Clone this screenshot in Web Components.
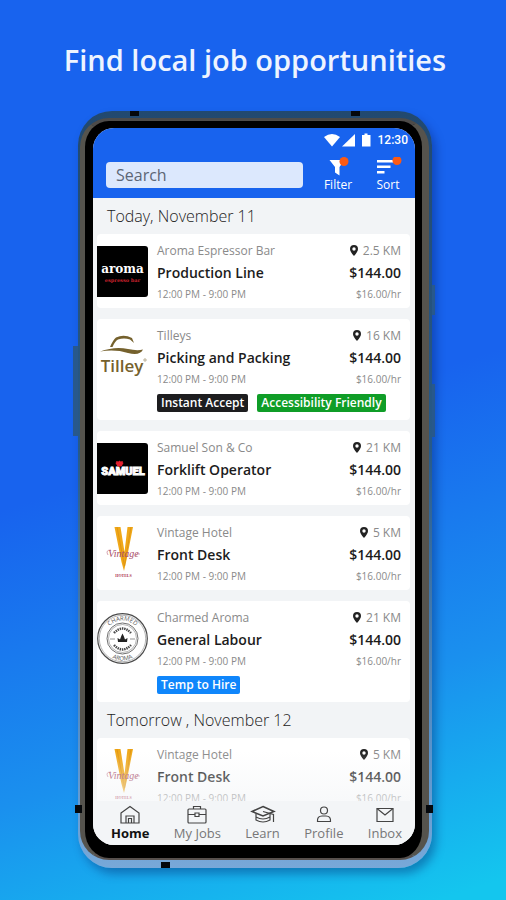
<!DOCTYPE html>
<html lang="en">
<head>
<meta charset="utf-8">
<meta name="viewport" content="width=device-width, initial-scale=1">
<title>Find local job opportunities</title>
<style>
    html, body {
        margin: 0;
        height: 100%;
    }

    body {
        font-family: "Open Sans", "Noto Sans", sans-serif;
        background: linear-gradient(162deg, #1863ee 0%, #1863ee 48%, #1a90ee 76%, #14c6ee 98%);
    }
</style>
</head>
<body>

<promo-page>
    <span slot="title">Find local job opportunities</span>
    <phone-frame>
        <app-header slot="header"></app-header>
        <day-group day="Today, November 11">
            <job-card logo="aroma" company="Aroma Espressor Bar" role-name="Production Line" distance="2.5 KM"></job-card>
            <job-card logo="tilley" company="Tilleys" role-name="Picking and Packing" distance="16 KM">
                <job-tag>Instant Accept</job-tag>
                <job-tag color="green">Accessibility Friendly</job-tag>
            </job-card>
            <job-card logo="samuel" company="Samuel Son &amp; Co" role-name="Forklift Operator" distance="21 KM"></job-card>
            <job-card logo="vintage" company="Vintage Hotel" role-name="Front Desk" distance="5 KM"></job-card>
            <job-card logo="charmed" company="Charmed Aroma" role-name="General Labour" distance="21 KM">
                <job-tag color="blue">Temp to Hire</job-tag>
            </job-card>
        </day-group>
        <day-group day="Tomorrow , November 12">
            <job-card logo="vintage" company="Vintage Hotel" role-name="Front Desk" distance="5 KM"></job-card>
        </day-group>
        <tab-bar slot="footer">
            <tab-item icon="home" active>Home</tab-item>
            <tab-item icon="jobs">My Jobs</tab-item>
            <tab-item icon="learn">Learn</tab-item>
            <tab-item icon="profile">Profile</tab-item>
            <tab-item icon="inbox">Inbox</tab-item>
        </tab-bar>
    </phone-frame>
</promo-page>

<script>
const LOGOS = {
    aroma: `
        <svg viewBox="0 0 51 51">
            <path d="M0 0H48Q51 0 51 3V48Q51 51 48 51H0Z" fill="#000"/>
            <text x="25.5" y="27" text-anchor="middle" font-family="DejaVu Serif, serif" font-weight="700" font-size="12" fill="#fff">aroma</text>
            <text x="25.5" y="36" text-anchor="middle" font-family="DejaVu Serif, serif" font-weight="700" font-size="5" fill="#c8202c">espresso bar</text>
        </svg>`,
    tilley: `
        <svg viewBox="0 0 51 51">
            <g fill="#75612d">
                <path d="M13 16Q16 9 19 6.500Q27 3 35 7L37 12L33 8.500Q27 6.500 21 8.500Q18 10 15.500 16Z"/>
                <path d="M3 20.500Q18 15 31 18Q40 20 46 18.500Q43 25 31 22Q18 18 3 20.500Z"/>
            </g>
            <text x="25" y="41" text-anchor="middle" font-family="Open Sans, sans-serif" font-weight="600" font-size="17" fill="#75612d">Tilley</text>
            <circle cx="48" cy="29" r="1.2" fill="none" stroke="#75612d" stroke-width=".5"/>
        </svg>`,
    samuel: `
        <svg viewBox="0 0 51 51">
            <path d="M0 0H48Q51 0 51 3V48Q51 51 48 51H0Z" fill="#000"/>
            <text x="26" y="31.5" text-anchor="middle" font-family="Roboto, sans-serif" font-weight="900" font-size="11" fill="#fff" stroke="#fff" stroke-width=".9">SAMUEL</text>
            <path d="M20.500 23.500L18.500 20L19.500 19L19 18L21.500 18.500L22.500 17.500L23.500 18.500L26 18L25.500 19L26.500 20L24.500 23.500Z" fill="#e3202e"/>
        </svg>`,
    vintage: `
        <svg viewBox="0 2 51 51">
            <path d="M17.500 1H23.500L27.500 26L30.500 1H36L29.500 34L27 45L24.500 36Z" fill="#f0a818"/>
            <path d="M20 1L27.500 40L34 1" fill="none" stroke="#d98e12" stroke-width=".7"/>
            <text x="26.500" y="31" text-anchor="middle" font-family="Liberation Serif, serif" font-style="italic" font-size="10" fill="#a84a66">Vintage</text>
            <path d="M11 29Q8 24 14 24M38 30Q41 27 43 28" fill="none" stroke="#b8667c" stroke-width=".6"/>
            <text x="26.500" y="51" text-anchor="middle" font-family="Liberation Serif, serif" font-weight="700" font-size="4" fill="#ad3350">HOTELS</text>
        </svg>`,
    charmed: `
        <svg viewBox="0 0 51 51">
            <defs>
                <path id="top" d="M7.500 25.500A18 18 0 0 1 43.500 25.500"/>
                <path id="bottom" d="M3.500 25.500A22 22 0 0 0 47.500 25.500"/>
            </defs>
            <g fill="none" stroke="#4a4a4a">
                <circle cx="25.500" cy="25.500" r="24.800" stroke-width="1.200"/>
                <circle cx="25.500" cy="25.500" r="23.200" stroke-width=".4"/>
                <circle cx="25.500" cy="25.500" r="15.500" stroke-width=".8"/>
                <circle cx="25.500" cy="25.500" r="14" stroke-width=".4"/>
                <path d="M17 20Q25.500 11 34 20M17 32Q25.500 41 34 32" stroke-width="2.400" stroke-dasharray="1.500 .8"/>
                <path d="M13 26H18M33 26H38" stroke-width=".6"/>
            </g>
            <path d="M21 29L20.500 25L23 26.500L24.300 23L25.500 20.500L26.700 23L28 26.500L30.500 25L30 29Z" fill="#222"/>
            <g font-family="Open Sans, sans-serif" font-size="6" fill="#555">
                <text text-anchor="middle"><textPath href="#top" startOffset="50%">CHARMED</textPath></text>
                <text text-anchor="middle"><textPath href="#bottom" startOffset="50%">AROMA</textPath></text>
            </g>
        </svg>`
};

const TAB_ICONS = {
    home: '<path d="M2 8L11 1.500L20 8V18H2Z"/><path d="M7 18V11H15V18M9.500 18V13.500H12.500V18"/>',
    jobs: '<rect x="2" y="4" width="18" height="14" rx="1"/><path d="M7.500 4V1.500H14.500V4M2 9.500H9M13 9.500H20M9 8H13V11.500H9Z"/>',
    learn: '<path d="M11 1.500L22 6.500L11 11L0 6.500Z" stroke-width="1.500"/><path d="M4 9V15Q11 19 18 15V9M4 12Q11 16 18 12M11 6.500L21.500 9.500V17"/>',
    profile: '<circle cx="11" cy="5.500" r="3.500"/><path d="M4.500 16.500Q4 11 9 11H13Q18 11 17.500 16.500Z"/>',
    inbox: '<path d="M3 3.500H19V16.500H3Z"/><path d="M3 3.500L11 10L19 3.500"/>'
};

class PromoPage extends HTMLElement {
    constructor() {
        super();
        this.attachShadow({mode: 'open'});
        this.shadowRoot.innerHTML = `
            <style>
                :host {
                    display: flex;
                    flex-direction: column;
                    box-sizing: border-box;
                    height: 100vh;
                    min-height: 600px;
                    padding: 36px 74px 32px 78px;
                }

                h1 {
                    margin: 0 -40px 27px;
                    color: #eef4ff;
                    font-size: 29px;
                    line-height: 48px;
                    font-weight: 600;
                    text-align: center;
                    white-space: nowrap;
                }
            </style>
            <h1><slot name="title"></slot></h1>
            <slot></slot>
        `;
    }
}

class PhoneFrame extends HTMLElement {
    constructor() {
        super();
        this.attachShadow({mode: 'open'});
        this.shadowRoot.innerHTML = `
            <style>
                :host {
                    display: flex;
                    flex: 1;
                    min-height: 0;
                    box-sizing: border-box;
                    position: relative;
                    padding: 7px 3px 8px 2px;
                    border-radius: 34px;
                    background: linear-gradient(#22496f, #285a88 45%, #5b94cc 85%, #78a8d8);
                    box-shadow: 4px 6px 10px rgba(0, 20, 90, 0.35);
                }

                .bezel {
                    display: flex;
                    flex: 1;
                    min-width: 0;
                    box-sizing: border-box;
                    padding: 7px 7px 13px 8px;
                    border: solid;
                    border-width: 3px 7px 2px 5px;
                    border-radius: 29px;
                    border-color: #4d4b49 #55534d #57504d #55534d;
                    background: #000;
                }

                .screen {
                    display: flex;
                    flex-direction: column;
                    flex: 1;
                    min-width: 0;
                    overflow: hidden;
                    border-radius: 21px;
                    background: #f2f4f6;
                }

                .feed {
                    flex: 1;
                    min-height: 0;
                    overflow: hidden;
                    padding: 0 5px 0 4px;
                }

                /* hardware keys and antenna lines over the shell */
                i {
                    position: absolute;
                    background: #05080c;
                }

                .key {
                    background: #28588c;
                }
            </style>
            <i class="key" style="left: -5px; top: 31%; width: 5px; height: 12%"></i>
            <i class="key" style="right: -3px; top: 23%; width: 3px; height: 4%"></i>
            <i class="key" style="right: -3px; top: 36%; width: 3px; height: 7%"></i>
            <i style="left: 52px; top: 0; width: 9px; height: 5px"></i>
            <i style="right: 72px; top: 0; width: 9px; height: 5px"></i>
            <i style="left: 83px; bottom: 0; width: 9px; height: 6px"></i>
            <i style="left: -3px; bottom: 55px; width: 7px; height: 8px"></i>
            <i style="right: -1px; bottom: 55px; width: 7px; height: 8px"></i>
            <div class="bezel">
                <div class="screen">
                    <slot name="header"></slot>
                    <main class="feed"><slot></slot></main>
                    <slot name="footer"></slot>
                </div>
            </div>
        `;
    }
}

class AppHeader extends HTMLElement {
    constructor() {
        super();
        this.attachShadow({mode: 'open'});
        this.shadowRoot.innerHTML = `
            <style>
                :host {
                    display: block;
                    color: #fff;
                    background: #1863ee;
                }

                .status {
                    display: flex;
                    align-items: center;
                    justify-content: flex-end;
                    height: 24px;
                    padding-right: 7px;
                    font: 500 12px/24px Roboto, sans-serif;
                }

                .status svg {
                    width: 47px;
                    height: 14px;
                    margin-right: 7px;
                    fill: #fff;
                }

                .bar {
                    display: flex;
                    align-items: center;
                    gap: 10px;
                    height: 46px;
                    padding: 0 7px 0 13px;
                }

                input {
                    flex: 1;
                    min-width: 0;
                    box-sizing: border-box;
                    height: 26px;
                    margin-right: 5px;
                    padding: 0 10px;
                    border: 0;
                    border-radius: 4px;
                    background: #dce8fd;
                    color: #4b5563;
                    font: 16px "Open Sans", sans-serif;
                }

                input::placeholder {
                    color: #5c6675;
                    opacity: 1;
                }

                button {
                    display: flex;
                    flex-direction: column;
                    align-items: center;
                    width: 40px;
                    padding: 0;
                    border: 0;
                    background: none;
                    color: #fff;
                    font: 12px/16px "Open Sans", sans-serif;
                    cursor: pointer;
                }

                button svg {
                    width: 30px;
                    height: 20px;
                    fill: #fff;
                }

                .dot {
                    fill: #fb5a14;
                }
            </style>
            <div class="status">
                <svg viewBox="0 0 47 14" aria-hidden="true">
                    <path d="M0 4Q8 -2 16 4L8 13.500Z"/>
                    <path d="M31 1V13.500H18Z"/>
                    <path d="M38 2H40.500V.5H43.500V2H46.500V13.500H38Z"/>
                </svg>
                <span>12:30</span>
            </div>
            <div class="bar">
                <input type="search" placeholder="Search" aria-label="Search">
                <button type="button">
                    <svg viewBox="0 0 30 20" aria-hidden="true">
                        <path d="M6.500 3H21.500L16.500 10V18.500L12 15.500V10Z"/>
                        <circle class="dot" cx="21" cy="4.500" r="4.500"/>
                    </svg>
                    Filter
                </button>
                <button type="button">
                    <svg viewBox="0 0 30 20" aria-hidden="true">
                        <path d="M4 3H21V5.500H4ZM4 8.500H17.500V11H4ZM4 14H11.500V16.500H4Z"/>
                        <circle class="dot" cx="24" cy="3.500" r="4.500"/>
                    </svg>
                    Sort
                </button>
            </div>
        `;
    }
}

class DayGroup extends HTMLElement {
    constructor() {
        super();
        this.attachShadow({mode: 'open'});
        this.shadowRoot.innerHTML = `
            <style>
                :host {
                    display: block;
                }

                h2 {
                    margin: 0;
                    padding-left: 10px;
                    color: #222;
                    font-size: 16px;
                    line-height: 36px;
                    font-weight: 300;
                }

                .cards {
                    display: flex;
                    flex-direction: column;
                    gap: 11px;
                }
            </style>
            <h2>${this.getAttribute('day')}</h2>
            <div class="cards"><slot></slot></div>
        `;
    }
}

class JobCard extends HTMLElement {
    constructor() {
        super();
        this.attachShadow({mode: 'open'});
        const tags = this.children.length ? '<div class="tags"><slot></slot></div>' : '';
        this.shadowRoot.innerHTML = `
            <style>
                :host {
                    display: flex;
                    padding: 8px 9px 6px 0;
                    border-radius: 4px;
                    background: #fff;
                    color: #8a8a8a;
                }

                .logo {
                    flex: none;
                    width: 51px;
                    height: 51px;
                    margin: 4px 9px 0 0;
                }

                .logo svg {
                    display: block;
                    width: 100%;
                    overflow: visible;
                }

                .body {
                    flex: 1;
                    min-width: 0;
                }

                .row {
                    display: flex;
                    justify-content: space-between;
                    font-size: 12px;
                    line-height: 18px;
                    white-space: nowrap;
                }

                .title {
                    color: #1c1c1c;
                    font-size: 14px;
                    line-height: 26px;
                    font-weight: 600;
                }

                h3 {
                    margin: 0;
                    font: inherit;
                }

                .small {
                    font-size: 10px;
                    line-height: 16px;
                }

                .distance {
                    display: flex;
                    align-items: center;
                    gap: 5px;
                }

                .distance svg {
                    width: 8px;
                    height: 12px;
                }

                .tags {
                    display: flex;
                    gap: 9px;
                    margin: 7px 0 2px;
                }
            </style>
            <div class="logo">${LOGOS[this.getAttribute('logo')]}</div>
            <div class="body">
                <div class="row">
                    <span>${this.getAttribute('company').replace('&', '&amp;')}</span>
                    <span class="distance">
                        <svg viewBox="0 0 8 12" aria-hidden="true"><path fill="#222" fill-rule="evenodd" d="M4 0A4 4 0 0 1 8 4Q8 6.500 4 11Q0 6.500 0 4A4 4 0 0 1 4 0ZM4 2.300A1.700 1.700 0 1 0 4 5.700A1.700 1.700 0 1 0 4 2.300Z"/></svg>
                        ${this.getAttribute('distance')}
                    </span>
                </div>
                <div class="row title">
                    <h3>${this.getAttribute('role-name')}</h3>
                    <span>$144.00</span>
                </div>
                <div class="row small">
                    <span>12:00 PM - 9:00 PM</span>
                    <span>$16.00/hr</span>
                </div>
                ${tags}
            </div>
        `;
    }
}

class JobTag extends HTMLElement {
    constructor() {
        super();
        this.attachShadow({mode: 'open'});
        this.shadowRoot.innerHTML = `
            <style>
                :host {
                    display: block;
                    padding: 0 4px;
                    border-radius: 2px;
                    background: #1d1d1f;
                    color: #fff;
                    font-size: 12px;
                    line-height: 18px;
                    font-weight: 600;
                    white-space: nowrap;
                }

                :host([color="green"]) {
                    background: #0f9d27;
                }

                :host([color="blue"]) {
                    background: #0f86fb;
                }
            </style>
            <slot></slot>
        `;
    }
}

class TabBar extends HTMLElement {
    constructor() {
        super();
        this.attachShadow({mode: 'open'});
        this.shadowRoot.innerHTML = `
            <style>
                :host {
                    display: block;
                    position: relative;
                    background: #f3f5f7;
                }

                /* fade of the feed into the bar */
                :host::before {
                    content: '';
                    position: absolute;
                    left: 0;
                    right: 0;
                    bottom: 100%;
                    height: 50px;
                    background: linear-gradient(rgba(243, 245, 247, 0), rgba(243, 245, 247, 0.6));
                    pointer-events: none;
                }

                nav {
                    display: flex;
                    justify-content: space-between;
                    height: 44px;
                    padding: 0 13px 0 18px;
                }
            </style>
            <nav><slot></slot></nav>
        `;
    }
}

class TabItem extends HTMLElement {
    constructor() {
        super();
        this.attachShadow({mode: 'open'});
        this.shadowRoot.innerHTML = `
            <style>
                :host {
                    display: block;
                    color: #777;
                }

                :host([active]) {
                    color: #111;
                    font-weight: 700;
                }

                a {
                    display: flex;
                    flex-direction: column;
                    align-items: center;
                    padding-top: 4px;
                    color: inherit;
                    font-size: 13px;
                    line-height: 16px;
                    text-decoration: none;
                }

                svg {
                    width: 22px;
                    height: 20px;
                    fill: none;
                    stroke: #444;
                    stroke-width: 1.2;
                    overflow: visible;
                }
            </style>
            <a href="#${this.getAttribute('icon')}">
                <svg viewBox="0 0 22 20" aria-hidden="true">${TAB_ICONS[this.getAttribute('icon')]}</svg>
                <slot></slot>
            </a>
        `;
    }
}

customElements.define('promo-page', PromoPage);
customElements.define('phone-frame', PhoneFrame);
customElements.define('app-header', AppHeader);
customElements.define('day-group', DayGroup);
customElements.define('job-card', JobCard);
customElements.define('job-tag', JobTag);
customElements.define('tab-bar', TabBar);
customElements.define('tab-item', TabItem);
</script>
</body>
</html>
